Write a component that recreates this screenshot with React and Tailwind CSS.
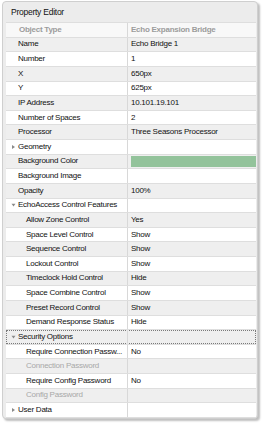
const rows = [
  { label: 'Name', value: 'Echo Bridge 1' },
  { label: 'Number', value: '1' },
  { label: 'X', value: '650px' },
  { label: 'Y', value: '625px' },
  { label: 'IP Address', value: '10.101.19.101' },
  { label: 'Number of Spaces', value: '2' },
  { label: 'Processor', value: 'Three Seasons Processor' },
  { label: 'Geometry', arrow: 'right' },
  { label: 'Background Color', swatch: true },
  { label: 'Background Image' },
  { label: 'Opacity', value: '100%' },
  { label: 'EchoAccess Control Features', arrow: 'down' },
  { label: 'Allow Zone Control', value: 'Yes', child: true },
  { label: 'Space Level Control', value: 'Show', child: true },
  { label: 'Sequence Control', value: 'Show', child: true },
  { label: 'Lockout Control', value: 'Show', child: true },
  { label: 'Timeclock Hold Control', value: 'Hide', child: true },
  { label: 'Space Combine Control', value: 'Show', child: true },
  { label: 'Preset Record Control', value: 'Show', child: true },
  { label: 'Demand Response Status', value: 'Hide', child: true },
  { label: 'Security Options', arrow: 'down', focused: true },
  { label: 'Require Connection Passw...', value: 'No', child: true },
  { label: 'Connection Password', child: true, disabled: true },
  { label: 'Require Config Password', value: 'No', child: true },
  { label: 'Config Password', child: true, disabled: true },
  { label: 'User Data', arrow: 'right' },
];

const Arrow = ({ dir }) => (
  <svg width="5" height="5" viewBox="0 0 5 5" className="absolute left-[5px] top-1/2 -translate-y-1/2">
    {dir === 'right' ? (
      <path d="M1 0.5 L4 2.5 L1 4.5 Z" fill="#8a8a8a" />
    ) : (
      <path d="M0.5 1.2 L4.5 1.2 L2.5 4 Z" fill="#8a8a8a" />
    )}
  </svg>
);

function Row({ row, index }) {
  const shade = index % 2 === 0 ? 'bg-[#efefef]' : 'bg-white';
  return (
    <div className={`relative flex h-[14.63px] border-b border-[#dedede] ${shade}`}>
      {row.focused && (
        <div className="absolute inset-0 border border-dotted border-[#7a7a7a] pointer-events-none" />
      )}
      <div
        className={`relative w-[122px] shrink-0 flex items-center border-r border-[#d8d8d8] whitespace-nowrap overflow-hidden ${
          row.child ? 'pl-[20px]' : 'pl-[12px]'
        } ${row.disabled ? 'text-[#a8a8a8]' : 'text-[#111]'}`}
      >
        {row.arrow && <Arrow dir={row.arrow} />}
        {row.label}
      </div>
      <div className="flex-1 flex items-center pl-[3px] text-[#111] whitespace-nowrap overflow-hidden">
        {row.swatch ? (
          <div className="w-full h-full py-[1px]">
            <div className="w-full h-full bg-[#93c39b]" />
          </div>
        ) : (
          row.value
        )}
      </div>
    </div>
  );
}

export default function App() {
  return (
    <div
      className="w-[263px] h-[426px] bg-white pt-[1px] pl-[2px] text-[8px] tracking-[-0.25px] leading-none"
      style={{ fontFamily: '"Liberation Sans", Arial, sans-serif' }}
    >
      <div className="w-[256px] h-[418px] rounded-[4px] border border-[#cfcfcf] bg-[#ececec] shadow-[2px_2px_2px_rgba(0,0,0,0.25)] flex flex-col">
        <div className="h-[20px] shrink-0 flex items-center pl-[8px] text-[8.5px] text-[#111]">Property Editor</div>
        <div className="ml-[3px] mr-[1px] border-t border-[#dedede]">
          <div className="flex h-[14.63px] border-b border-[#dedede] bg-[#f8f8f8] font-bold text-[#9c9c9c]">
            <div className="w-[122px] shrink-0 flex items-center pl-[13px] border-r border-[#d8d8d8]">Object Type</div>
            <div className="flex-1 flex items-center pl-[3px]">Echo Expansion Bridge</div>
          </div>
          {rows.map((row, i) => (
            <Row key={row.label} row={row} index={i} />
          ))}
        </div>
      </div>
    </div>
  );
}
